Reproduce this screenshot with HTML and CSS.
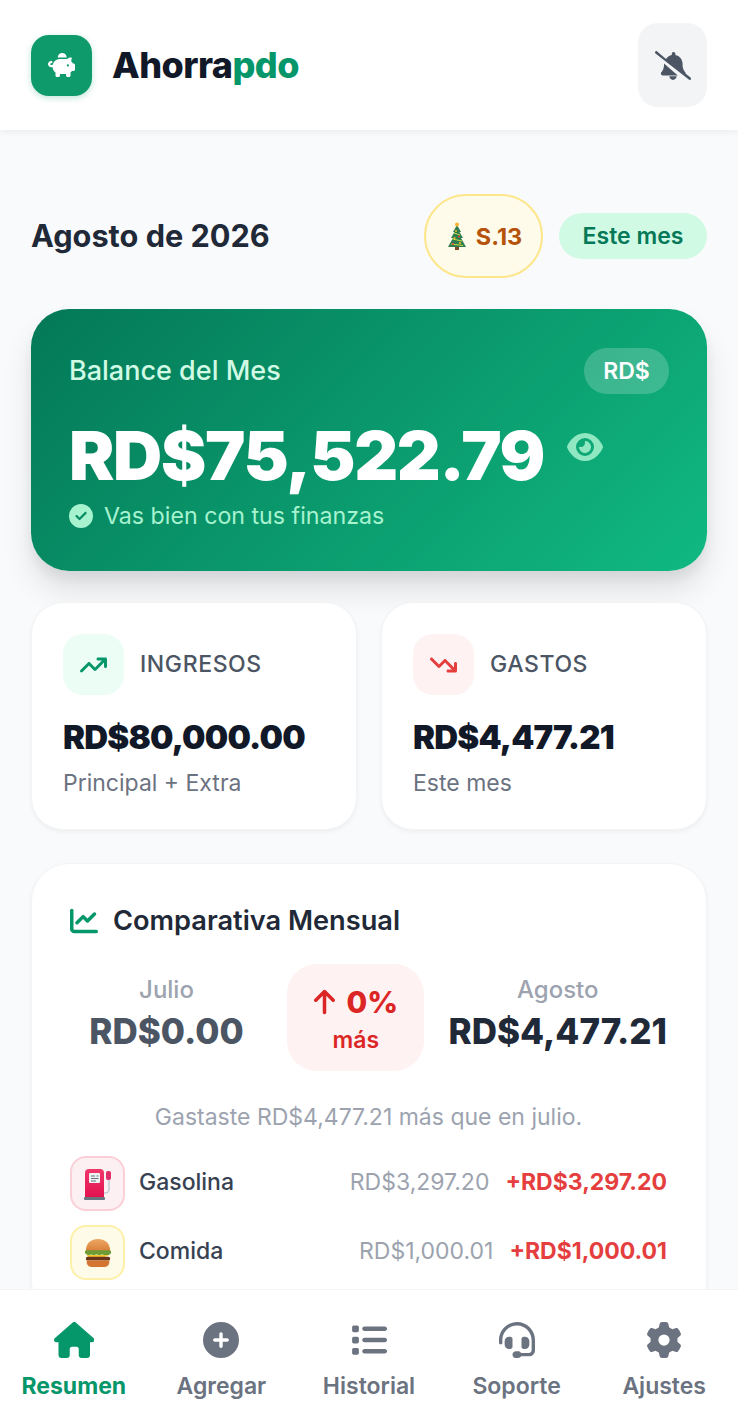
FILE: index.html
```html
<!DOCTYPE html>
<html lang="es">
  <head>
    <meta charset="utf-8" />
    <meta name="viewport" content="width=device-width, initial-scale=1" />
    <title>Ahorrapdo</title>
    <link rel="stylesheet" href="styles.css">
  </head>
  <body>
    <div class="app">
      <header class="topbar">
        <div class="brand">
          <div class="brand-logo">
            <svg class="icon" viewBox="0 0 576 512"><path d="M400 96l0 .7c-5.3-.4-10.6-.7-16-.7H256c-16.5 0-32.5 2.1-47.8 6c-.1-2-.2-4-.2-6c0-53 43-96 96-96s96 43 96 96zm-16 32c3.5 0 7 .1 10.4 .3c4.2 .3 8.4 .7 12.6 1.3C424.6 109.1 450.8 96 480 96h11.5c10.4 0 18 9.8 15.5 19.9l-13.8 55.2c15.8 14.8 28.7 32.8 37.5 52.9H544c17.7 0 32 14.3 32 32v96c0 17.7-14.3 32-32 32H512c-9.1 12.1-19.9 22.9-32 32v64c0 17.7-14.3 32-32 32H416c-17.7 0-32-14.3-32-32V448H256v32c0 17.7-14.3 32-32 32H192c-17.7 0-32-14.3-32-32V416c-34.9-26.2-58.7-66.3-63.2-112H68c-37.6 0-68-30.4-68-68s30.4-68 68-68h4c13.3 0 24 10.7 24 24s-10.7 24-24 24H68c-11 0-20 9-20 20s9 20 20 20H99.2c12.1-59.8 57.7-107.5 116.3-122.8c12.9-3.4 26.5-5.2 40.5-5.2H384zm64 136a24 24 0 1 0 -48 0 24 24 0 1 0 48 0z"/></svg>
          </div>
          <div class="brand-name">Ahorra<span>pdo</span></div>
        </div>
        <button class="bell-button">
          <svg class="icon" viewBox="0 0 640 512"><path d="M38.8 5.1C28.4-3.1 13.3-1.2 5.1 9.2S-1.2 34.7 9.2 42.9l592 464c10.4 8.2 25.5 6.3 33.7-4.1s6.3-25.5-4.1-33.7L542.6 400c2.7-7.8 1.3-16.5-4.2-23.1l-5-6.1c-27.8-33.7-43-76-43-119.7V224c0-77.4-55-142-128-156.8V48c0-17.7-14.3-32-32-32s-32 14.3-32 32V67.2c-43.2 8.8-80 35.1-102.1 71.1L38.8 5.1zM160 222.1V251.1c0 43.6-15.2 86-43 119.7l-5 6.1c-7.8 9.4-9.4 22.4-4.2 33.5S122 432 134.3 432H406.2zM384 448H256c0 17 6.7 33.3 18.7 45.3s28.3 18.7 45.3 18.7s33.3-6.7 45.3-18.7s18.7-28.3 18.7-45.3z"/></svg>
        </button>
      </header>

      <main class="content">
        <div class="month-row">
          <h2 class="month-title">Agosto de 2026</h2>
          <div class="month-tags">
            <div class="week-tag">
              <svg class="tree" viewBox="0 0 24 30">
                <rect x="10" y="25" width="4" height="4" fill="#7a4a2a"/>
                <path d="M12 4 16 11H14.500L18 17H16L21 26H3L8 17H6L9.500 11H8Z" fill="#2e7d4f"/>
                <path d="M9 12 15 14M7.500 18 17 20M6 23 18 24.500" stroke="#c7d93f" stroke-width="1"/>
                <circle cx="12" cy="3.500" r="2" fill="#f2b632"/>
                <circle cx="11" cy="10" r="1" fill="#f2b632"/>
                <circle cx="14" cy="15.500" r="1.100" fill="#e0483e"/>
                <circle cx="9.500" cy="17" r="1.100" fill="#f2b632"/>
                <circle cx="15" cy="22" r="1.100" fill="#f2b632"/>
                <circle cx="8" cy="23" r="1.100" fill="#e0483e"/>
              </svg>
              <span>S.13</span>
            </div>
            <div class="period-tag">Este mes</div>
          </div>
        </div>

        <section class="balance-card">
          <div class="balance-top">
            <div class="balance-label">Balance del Mes</div>
            <div class="currency-tag">RD$</div>
          </div>
          <div class="balance-row">
            <div class="balance-value">RD$75,522.79</div>
            <svg class="icon eye" viewBox="0 0 576 512"><path d="M288 32c-80.800 0-145.500 36.800-192.600 80.600C48.600 156 17.300 208 2.500 243.700c-3.300 7.900-3.300 16.700 0 24.600C17.300 304 48.600 356 95.400 399.400C142.500 443.200 207.200 480 288 480s145.500-36.800 192.600-80.600c46.800-43.500 78.100-95.400 93-131.100c3.300-7.900 3.300-16.700 0-24.600c-14.900-35.700-46.200-87.700-93-131.100C433.500 68.800 368.800 32 288 32zM144 256a144 144 0 1 1 288 0 144 144 0 1 1 -288 0zm144-64c0 35.300-28.700 64-64 64c-7.100 0-13.900-1.200-20.300-3.300c-5.500-1.800-11.900 1.600-11.700 7.400c.3 6.900 1.300 13.800 3.200 20.700c13.700 51.200 66.400 81.600 117.600 67.900s81.600-66.400 67.900-117.600c-11.100-41.500-47.800-69.400-88.600-71.100c-5.800-.2-9.200 6.100-7.400 11.700c2.100 6.400 3.300 13.200 3.300 20.300z"/></svg>
          </div>
          <div class="balance-status">
            <svg class="icon" viewBox="0 0 512 512"><path d="M256 512A256 256 0 1 0 256 0a256 256 0 1 0 0 512zM369 209L241 337c-9.400 9.400-24.600 9.400-33.900 0l-64-64c-9.400-9.400-9.400-24.600 0-33.900s24.600-9.400 33.900 0l47 47L335 175c9.400-9.400 24.600-9.400 33.900 0s9.400 24.600 0 33.900z"/></svg>
            <span>Vas bien con tus finanzas</span>
          </div>
        </section>

        <div class="stats">
          <section class="stat-card">
            <div class="stat-head">
              <div class="stat-icon up">
                <svg class="icon" viewBox="0 0 576 512"><path d="M384 160c-17.700 0-32-14.300-32-32s14.300-32 32-32H544c17.700 0 32 14.300 32 32V288c0 17.700-14.300 32-32 32s-32-14.300-32-32V205.300L342.600 374.600c-12.500 12.500-32.800 12.500-45.300 0L192 269.300 54.600 406.600c-12.500 12.500-32.800 12.500-45.300 0s-12.500-32.800 0-45.300l160-160c12.500-12.500 32.800-12.500 45.300 0L320 306.700 466.700 160H384z"/></svg>
              </div>
              <div class="stat-label">INGRESOS</div>
            </div>
            <div class="stat-value">RD$80,000.00</div>
            <div class="stat-sub">Principal + Extra</div>
          </section>
          <section class="stat-card">
            <div class="stat-head">
              <div class="stat-icon down">
                <svg class="icon" viewBox="0 0 576 512"><path d="M384 352c-17.700 0-32 14.300-32 32s14.300 32 32 32H544c17.700 0 32-14.300 32-32V224c0-17.700-14.300-32-32-32s-32 14.300-32 32v82.700L342.600 137.400c-12.500-12.500-32.800-12.500-45.300 0L192 242.700 54.600 105.400c-12.500-12.500-32.800-12.500-45.300 0s-12.500 32.800 0 45.300l160 160c12.500 12.500 32.800 12.500 45.300 0L320 205.300 466.700 352H384z"/></svg>
              </div>
              <div class="stat-label">GASTOS</div>
            </div>
            <div class="stat-value">RD$4,477.21</div>
            <div class="stat-sub">Este mes</div>
          </section>
        </div>

        <section class="compare-card">
          <h3 class="compare-title">
            <svg class="icon" viewBox="0 0 512 512"><path d="M64 64c0-17.700-14.300-32-32-32S0 46.300 0 64V400c0 44.200 35.800 80 80 80H480c17.700 0 32-14.300 32-32s-14.300-32-32-32H80c-8.800 0-16-7.200-16-16V64zm406.600 86.600c12.500-12.500 12.500-32.800 0-45.300s-32.800-12.500-45.300 0L320 210.700l-57.400-57.400c-12.500-12.500-32.800-12.500-45.300 0l-112 112c-12.500 12.500-12.500 32.800 0 45.300s32.800 12.500 45.300 0L240 221.300l57.400 57.400c12.500 12.500 32.800 12.500 45.300 0l128-128z"/></svg>
            <span>Comparativa Mensual</span>
          </h3>
          <div class="compare-grid">
            <div class="compare-side">
              <div class="compare-month">Julio</div>
              <div class="compare-amount prev">RD$0.00</div>
            </div>
            <div class="compare-delta">
              <div class="delta-value">
                <svg class="icon" viewBox="0 0 384 512"><path d="M214.600 41.400c-12.500-12.500-32.800-12.500-45.300 0l-160 160c-12.500 12.500-12.500 32.800 0 45.300s32.800 12.500 45.300 0L160 141.200V448c0 17.700 14.300 32 32 32s32-14.300 32-32V141.200L329.400 246.600c12.500 12.500 32.800 12.500 45.300 0s12.500-32.800 0-45.300l-160-160z"/></svg>
                <span>0%</span>
              </div>
              <div class="delta-word">más</div>
            </div>
            <div class="compare-side">
              <div class="compare-month">Agosto</div>
              <div class="compare-amount">RD$4,477.21</div>
            </div>
          </div>
          <p class="compare-note">Gastaste RD$4,477.21 más que en julio.</p>
          <div class="compare-rows">
            <div class="cat-row">
              <div class="cat-icon fuel">
                <svg viewBox="0 0 28 32" width="28" height="32">
                  <defs>
                    <linearGradient id="pumpBody" x1="0" y1="0" x2="0" y2="1">
                      <stop offset="0" stop-color="#f0386b"/>
                      <stop offset="1" stop-color="#e3124f"/>
                    </linearGradient>
                  </defs>
                  <path d="M19 25H21C23.500 25 25 23.500 25 21V13L24 10" fill="none" stroke="#c3ced5" stroke-width="1.600"/>
                  <rect x="22" y="3" width="5" height="9" rx="2" fill="#dd2e6a"/>
                  <path d="M5 1H16A4 4 0 0 1 20 5V29H1V5A4 4 0 0 1 5 1Z" fill="url(#pumpBody)"/>
                  <rect x="5" y="5" width="11" height="10" rx="1" fill="#eef1f2"/>
                  <path d="M7 8H11M12.500 8H14.500M7 10.500H14.500M7 13H12" stroke="#66757f" stroke-width="1"/>
                  <rect x="0" y="29" width="21" height="3" rx="1" fill="#66757f"/>
                </svg>
              </div>
              <div class="cat-name">Gasolina</div>
              <div class="cat-prev">RD$3,297.20</div>
              <div class="cat-diff">+RD$3,297.20</div>
            </div>
            <div class="cat-row">
              <div class="cat-icon food">
                <svg viewBox="0 0 32 32" width="30" height="30">
                  <defs>
                    <linearGradient id="bunTop" x1="0" y1="0" x2="0" y2="1">
                      <stop offset="0" stop-color="#eda663"/>
                      <stop offset="1" stop-color="#d9803a"/>
                    </linearGradient>
                  </defs>
                  <path d="M3 14C3 5 9 1 16 1S29 5 29 14Z" fill="url(#bunTop)"/>
                  <path d="M2 15C2 13.500 3 13 4 13H28C29 13 30 13.500 30 15S29 18 27 18 24 19 22 18 18 19 16 18 12 19 10 18 7 19 5 18 2 17 2 15Z" fill="#6d9b35"/>
                  <path d="M4 18H28L21 21 18 23 15 21H6Z" fill="#f8c630"/>
                  <rect x="3" y="20" width="26" height="4" rx="2" fill="#6b3419"/>
                  <path d="M4 24H28V26C28 29 25 31 22 31H10C7 31 4 29 4 26Z" fill="#d4762f"/>
                </svg>
              </div>
              <div class="cat-name">Comida</div>
              <div class="cat-prev">RD$1,000.01</div>
              <div class="cat-diff">+RD$1,000.01</div>
            </div>
          </div>
        </section>
      </main>

      <nav class="tabbar">
        <a class="tab active">
          <svg class="icon" viewBox="0 0 576 512"><path d="M575.800 255.500c0 18-15 32.100-32 32.100h-32l.7 160.200c0 2.700-.2 5.400-.5 8.100V472c0 22.100-17.900 40-40 40H456c-1.100 0-2.200 0-3.300-.1c-1.400 .1-2.800 .1-4.200 .1H416 392c-22.100 0-40-17.900-40-40V448 384c0-17.700-14.300-32-32-32H256c-17.700 0-32 14.300-32 32v64 24c0 22.100-17.900 40-40 40H160 128.100c-1.500 0-3-.1-4.500-.2c-1.200 .1-2.400 .2-3.600 .2H104c-22.100 0-40-17.900-40-40V360c0-.9 0-1.900 .1-2.800V287.600H32c-18 0-32-14-32-32.100c0-9 3-17 10-24L266.400 8c7-7 15-8 22-8s15 2 21 7L564.800 231.500c8 7 12 15 11 24z"/></svg>
          <span>Resumen</span>
        </a>
        <a class="tab">
          <svg class="icon" viewBox="0 0 512 512"><path d="M256 512A256 256 0 1 0 256 0a256 256 0 1 0 0 512zM232 344V280H168c-13.300 0-24-10.700-24-24s10.700-24 24-24h64V168c0-13.300 10.700-24 24-24s24 10.700 24 24v64h64c13.300 0 24 10.700 24 24s-10.700 24-24 24H280v64c0 13.300-10.700 24-24 24s-24-10.700-24-24z"/></svg>
          <span>Agregar</span>
        </a>
        <a class="tab">
          <svg class="icon" viewBox="0 0 512 512"><path d="M40 48C26.700 48 16 58.700 16 72v48c0 13.300 10.700 24 24 24H88c13.300 0 24-10.700 24-24V72c0-13.300-10.700-24-24-24H40zM192 64c-17.700 0-32 14.300-32 32s14.300 32 32 32H480c17.700 0 32-14.300 32-32s-14.300-32-32-32H192zm0 160c-17.700 0-32 14.300-32 32s14.300 32 32 32H480c17.700 0 32-14.300 32-32s-14.300-32-32-32H192zm0 160c-17.700 0-32 14.300-32 32s14.300 32 32 32H480c17.700 0 32-14.300 32-32s-14.300-32-32-32H192zM16 232v48c0 13.300 10.700 24 24 24H88c13.300 0 24-10.700 24-24V232c0-13.300-10.700-24-24-24H40c-13.300 0-24 10.700-24 24zM40 368c-13.300 0-24 10.700-24 24v48c0 13.300 10.700 24 24 24H88c13.300 0 24-10.700 24-24V392c0-13.300-10.700-24-24-24H40z"/></svg>
          <span>Historial</span>
        </a>
        <a class="tab">
          <svg class="icon" viewBox="0 0 512 512"><path d="M256 48C141.100 48 48 141.100 48 256v40c0 13.300-10.700 24-24 24s-24-10.700-24-24V256C0 114.600 114.600 0 256 0S512 114.600 512 256V400.100c0 48.600-39.400 88-88.100 88L313.600 488c-8.300 14.300-23.800 24-41.600 24H240c-26.500 0-48-21.500-48-48s21.500-48 48-48h32c17.800 0 33.300 9.700 41.600 24l110.400 .1c22.100 0 40-17.900 40-40V256c0-114.900-93.100-208-208-208zM144 208h16c17.700 0 32 14.300 32 32V352c0 17.700-14.300 32-32 32H144c-35.300 0-64-28.700-64-64V272c0-35.300 28.700-64 64-64zm224 0c35.300 0 64 28.700 64 64v48c0 35.300-28.700 64-64 64H352c-17.700 0-32-14.300-32-32V240c0-17.700 14.300-32 32-32h16z"/></svg>
          <span>Soporte</span>
        </a>
        <a class="tab">
          <svg class="icon" viewBox="0 0 512 512"><path d="M495.900 166.600c3.200 8.700 .5 18.400-6.400 24.600l-43.300 39.400c1.100 8.300 1.700 16.800 1.700 25.400s-.6 17.100-1.700 25.400l43.300 39.400c6.900 6.200 9.600 15.900 6.400 24.600c-4.400 11.900-9.700 23.300-15.800 34.300l-4.700 8.100c-6.600 11-14 21.400-22.100 31.200c-5.900 7.200-15.700 9.600-24.500 6.800l-55.700-17.700c-13.400 10.300-28.200 18.900-44 25.400l-12.500 57.100c-2 9.100-9 16.300-18.200 17.800c-13.800 2.300-28 3.500-42.500 3.500s-28.700-1.200-42.500-3.500c-9.200-1.500-16.200-8.700-18.200-17.800l-12.500-57.100c-15.800-6.500-30.600-15.100-44-25.400L83.100 425.900c-8.800 2.800-18.600 .3-24.500-6.800c-8.100-9.800-15.500-20.200-22.100-31.200l-4.700-8.100c-6.100-11-11.400-22.400-15.800-34.300c-3.200-8.700-.5-18.400 6.400-24.600l43.300-39.400C64.600 273.100 64 264.600 64 256s.6-17.100 1.700-25.400L22.400 191.200c-6.900-6.200-9.600-15.900-6.400-24.600c4.400-11.900 9.700-23.300 15.800-34.300l4.700-8.100c6.600-11 14-21.400 22.100-31.200c5.900-7.200 15.700-9.600 24.500-6.800l55.700 17.700c13.400-10.300 28.200-18.900 44-25.400l12.500-57.100c2-9.100 9-16.300 18.200-17.800C227.300 1.200 241.500 0 256 0s28.700 1.200 42.500 3.500c9.200 1.500 16.200 8.700 18.200 17.800l12.500 57.100c15.800 6.500 30.600 15.100 44 25.400l55.700-17.700c8.800-2.800 18.600-.3 24.500 6.800c8.100 9.800 15.500 20.200 22.100 31.200l4.700 8.100c6.100 11 11.400 22.400 15.800 34.300zM256 336a80 80 0 1 0 0-160 80 80 0 1 0 0 160z"/></svg>
          <span>Ajustes</span>
        </a>
      </nav>
    </div>
  </body>
</html>
```

FILE: styles.css
```css
* {
  box-sizing: border-box;
}

html,
body {
  margin: 0;
  padding: 0;
}

body {
  font-family: Inter, "Liberation Sans", sans-serif;
  background: #f9fafb;
  color: #1f2937;
}

.icon {
  display: block;
  fill: currentColor;
}

.app {
  display: flex;
  flex-direction: column;
  width: 100%;
  height: 100vh;
  overflow: hidden;
}

/* top bar */
.topbar {
  display: flex;
  align-items: center;
  justify-content: space-between;
  flex-shrink: 0;
  height: 130px;
  padding: 0 31px;
  background: #fff;
  box-shadow: 0 2px 6px rgba(0, 0, 0, 0.06);
  position: relative;
}

.brand {
  display: flex;
  align-items: center;
  gap: 20px;
}

.brand-logo {
  display: flex;
  align-items: center;
  justify-content: center;
  width: 61px;
  height: 61px;
  border-radius: 18px;
  background: #0f9a6c;
  color: #fff;
  box-shadow: 0 2px 6px rgba(5, 150, 105, 0.25);
}

.brand-logo .icon {
  width: 27px;
  height: 24px;
}

.brand-name {
  font-size: 36px;
  font-weight: 800;
  letter-spacing: -0.55px;
  color: #111827;
}

.brand-name span {
  color: #059669;
}

.bell-button {
  display: flex;
  align-items: center;
  justify-content: center;
  width: 69px;
  height: 84px;
  padding: 0;
  border: 0;
  border-radius: 20px;
  background: #f3f4f6;
  color: #4b5563;
}

.bell-button .icon {
  width: 36px;
  height: 29px;
}

/* main */
.content {
  flex: 1;
  min-height: 0;
  overflow: hidden;
  padding: 64px 31px 0;
}

.month-row {
  display: flex;
  align-items: center;
  justify-content: space-between;
  margin-bottom: 31px;
}

.month-title {
  margin: 0 0 2px;
  font-size: 30.7px;
  font-weight: 700;
  color: #1f2937;
}

.month-tags {
  display: flex;
  align-items: center;
  gap: 16px;
}

.week-tag {
  display: flex;
  align-items: center;
  justify-content: center;
  gap: 7px;
  width: 119px;
  height: 84px;
  border: 2px solid #fde68a;
  border-radius: 42px;
  background: #fffbeb;
  color: #b45309;
  font-size: 23.5px;
  font-weight: 700;
}

.tree {
  width: 24px;
  height: 30px;
}

.period-tag {
  display: flex;
  align-items: center;
  justify-content: center;
  width: 148px;
  height: 46px;
  border-radius: 23px;
  background: #d1fae5;
  color: #047857;
  font-size: 23px;
  font-weight: 600;
}

/* balance */
.balance-card {
  height: 262px;
  padding: 39px 38px 0;
  border-radius: 38px;
  background: linear-gradient(135deg, #047857, #10b981);
  color: #fff;
  box-shadow: 0 20px 30px rgba(0, 0, 0, 0.1), 0 8px 12px rgba(0, 0, 0, 0.06);
}

.balance-top {
  display: flex;
  align-items: center;
  justify-content: space-between;
}

.balance-label {
  padding-bottom: 2px;
  font-size: 27px;
  font-weight: 500;
  color: #d1fae5;
}

.currency-tag {
  display: flex;
  align-items: center;
  justify-content: center;
  width: 85px;
  height: 46px;
  border-radius: 23px;
  background: rgba(255, 255, 255, 0.2);
  font-size: 23px;
  font-weight: 600;
}

.balance-row {
  display: flex;
  align-items: center;
  gap: 23px;
  margin-top: 17px;
}

.balance-value {
  font-size: 68px;
  line-height: 88px;
  font-weight: 900;
  letter-spacing: -1.3px;
}

.eye {
  width: 36px;
  height: 32px;
  margin-bottom: 16px;
  color: #a7f3d0;
  opacity: 0.85;
}

.balance-status {
  display: flex;
  align-items: center;
  gap: 11px;
  margin-top: 3px;
  font-size: 23.2px;
  color: #a7f3d0;
}

.balance-status .icon {
  width: 24px;
  height: 24px;
}

/* income and expense */
.stats {
  display: grid;
  grid-template-columns: 1fr 1fr;
  gap: 24px;
  margin-top: 31px;
}

.stat-card {
  height: 228px;
  padding: 31px;
  border: 1px solid #f3f4f6;
  border-radius: 32px;
  background: #fff;
  box-shadow: 0 2px 4px rgba(0, 0, 0, 0.05);
}

.stat-head {
  display: flex;
  align-items: center;
  gap: 16px;
}

.stat-icon {
  display: flex;
  align-items: center;
  justify-content: center;
  width: 61px;
  height: 61px;
  border-radius: 20px;
}

.stat-icon .icon {
  width: 27px;
  height: 24px;
}

.stat-icon.up {
  background: #ecfdf5;
  color: #059669;
}

.stat-icon.down {
  background: #fef2f2;
  color: #e53e3e;
}

.stat-label {
  padding-bottom: 2px;
  font-size: 23px;
  font-weight: 500;
  letter-spacing: 0.6px;
  color: #4b5563;
}

.stat-value {
  margin-top: 20px;
  font-size: 33px;
  line-height: 44px;
  font-weight: 900;
  letter-spacing: -0.8px;
  color: #111827;
}

.stat-sub {
  margin-top: 10px;
  font-size: 23px;
  line-height: 28px;
  color: #6b7280;
}

/* comparison */
.compare-card {
  margin-top: 33px;
  padding: 40px 39px 40px 38px;
  border: 1px solid #f3f4f6;
  border-radius: 38px;
  background: #fff;
  box-shadow: 0 2px 4px rgba(0, 0, 0, 0.05);
}

.compare-title {
  display: flex;
  align-items: center;
  gap: 15px;
  margin: 0;
  font-size: 27.2px;
  line-height: 34px;
  font-weight: 600;
  color: #1f2937;
}

.compare-title .icon {
  width: 28px;
  height: 28px;
  color: #059669;
}

.compare-grid {
  display: flex;
  align-items: flex-start;
  justify-content: space-between;
  margin-top: 26px;
}

.compare-side {
  padding-top: 11px;
  text-align: center;
}

.compare-side:first-child {
  width: 193px;
}

.compare-month {
  font-size: 24px;
  line-height: 30px;
  font-weight: 500;
  color: #9ca3af;
}

.compare-amount {
  margin-top: 4px;
  font-size: 35px;
  line-height: 44px;
  font-weight: 800;
  color: #1f2937;
}

.compare-amount.prev {
  color: #4b5563;
}

.compare-delta {
  display: flex;
  flex-direction: column;
  align-items: center;
  width: 137px;
  height: 107px;
  padding-top: 20px;
  border-radius: 30px;
  background: #fef2f2;
  color: #dc2626;
}

.delta-value {
  display: flex;
  align-items: center;
  gap: 10px;
  font-size: 30px;
  line-height: 36px;
  font-weight: 800;
}

.delta-value .icon {
  width: 23px;
  height: 28px;
}

.delta-word {
  margin-top: 6px;
  font-size: 23px;
  line-height: 28px;
  font-weight: 600;
}

.compare-note {
  margin: 32px 0 0;
  font-size: 23px;
  line-height: 28px;
  text-align: center;
  color: #9ca3af;
}

.compare-rows {
  display: flex;
  flex-direction: column;
  gap: 14px;
  margin-top: 25px;
}

.cat-row {
  display: flex;
  align-items: center;
}

.cat-icon {
  display: flex;
  align-items: center;
  justify-content: center;
  width: 55px;
  height: 55px;
  margin-right: 14px;
  border-radius: 16px;
}

.cat-icon.fuel {
  border: 2px solid #fbcfd8;
  background: #fdf0f3;
}

.cat-icon.food {
  border: 2px solid #fdf0a8;
  background: #fefce8;
}

.cat-name {
  flex: 1;
  padding-bottom: 4px;
  font-size: 23px;
  font-weight: 500;
  color: #374151;
}

.cat-prev {
  padding-bottom: 4px;
  font-size: 23px;
  color: #9ca3af;
}

.cat-diff {
  margin-left: 16px;
  padding-bottom: 4px;
  font-size: 23px;
  font-weight: 700;
  color: #e53e3e;
}

/* bottom tabs */
.tabbar {
  display: grid;
  grid-template-columns: repeat(5, 1fr);
  flex-shrink: 0;
  height: 136px;
  padding-top: 32px;
  background: #fff;
  border-top: 1px solid #f3f4f6;
  position: relative;
}

.tab {
  display: flex;
  flex-direction: column;
  align-items: center;
  gap: 13px;
  color: #6b7280;
  font-size: 23px;
  font-weight: 600;
  line-height: 30px;
}

.tab .icon {
  height: 36px;
}

.tab.active {
  color: #059669;
  font-weight: 700;
}
```
